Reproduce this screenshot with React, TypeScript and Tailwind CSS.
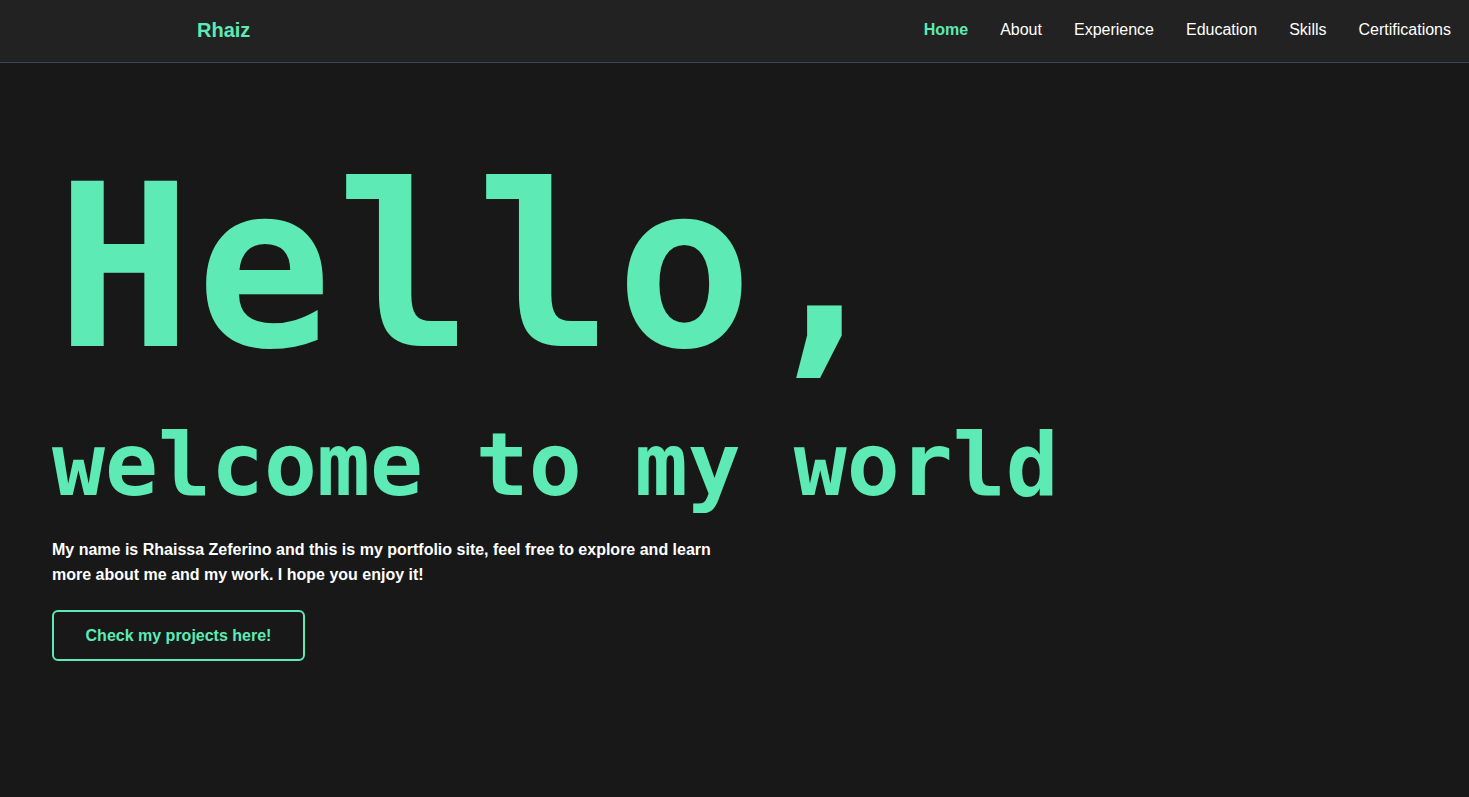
import React from "react";

const links = ["Home", "About", "Experience", "Education", "Skills", "Certifications"];

export default function App() {
  return (
    <div className="min-h-[797px] w-full bg-[#181818] font-['Liberation_Sans',Arial,sans-serif]">
      <header className="box-content flex h-[60px] items-center justify-between border-b border-[#3b4757] bg-[#222222] pb-[2px] pl-[197px] pr-[18px]">
        <div className="text-[20px] font-bold text-[#5eeab4]">Rhaiz</div>
        <nav className="flex items-center gap-[32px] text-[16px] text-white">
          {links.map((l, i) => (
            <a
              key={l}
              className={i === 0 ? "font-bold text-[#5eeab4]" : "text-white"}
            >
              {l}
            </a>
          ))}
        </nav>
      </header>
      <main className="px-[52px] pt-[92px]">
        <h1 className="ml-[4px] font-['DejaVu_Sans_Mono',monospace] text-[226px] leading-[1] font-bold tracking-[4px] text-[#5eeab4]">
          Hello,
        </h1>
        <h2 className="mt-[40px] font-['DejaVu_Sans_Mono',monospace] text-[88px] leading-[1] font-bold text-[#5eeab4]">
          welcome to my world
        </h2>
        <p className="mt-[28px] max-w-[680px] text-[16px] font-bold leading-[25px] text-white">
          My name is Rhaissa Zeferino and this is my portfolio site, feel free to explore and learn more about me and my work. I hope you enjoy it!
        </p>
        <button className="mt-[23px] h-[51px] w-[253px] rounded-[6px] border-2 border-[#5eeab4] text-[16px] font-bold text-[#5eeab4]">
          Check my projects here!
        </button>
      </main>
    </div>
  );
}
